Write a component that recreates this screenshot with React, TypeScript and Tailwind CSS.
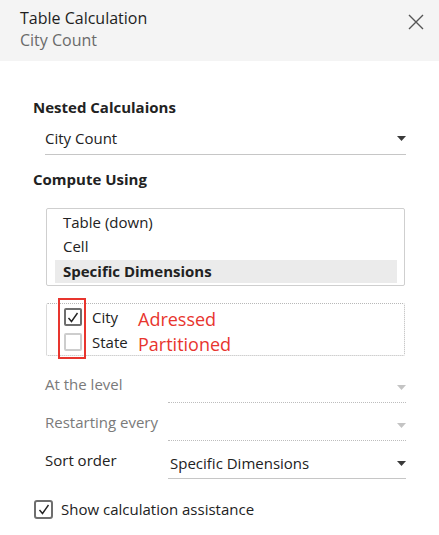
import React from "react";

const font = { fontFamily: '"Open Sans", "Noto Sans", Arial, sans-serif' };

const Caret = ({ light }: { light?: boolean }) => (
  <svg width="9" height="5" viewBox="0 0 9 5" className="shrink-0">
    <path d="M0 0h9L4.5 5z" fill={light ? "#c4c4c4" : "#3a3a3a"} />
  </svg>
);

const Check = () => (
  <svg width="12" height="11" viewBox="0 0 12 11">
    <path d="M1.5 6l3 3.5L10.5 1" fill="none" stroke="#222" strokeWidth="1.4" />
  </svg>
);

const FieldRow = ({ label, value, disabled }: { label: string; value?: string; disabled?: boolean }) => (
  <div className="flex items-end h-[38px]">
    <div className={`w-[123px] pb-[9px] leading-[20px] ${disabled ? "text-[#7a7a7a]" : "text-[#222]"}`}>{label}</div>
    <div
      className={`flex items-center w-[238px] h-[38px] pt-[8px] border-b ${
        disabled ? "border-dotted border-[#bdbdbd]" : "border-[#c6c6c6]"
      }`}
    >
      <span className="flex-1 pl-[2px] text-[#222]">{value}</span>
      <Caret light={disabled} />
    </div>
  </div>
);

export default function App() {
  return (
    <div className="w-[439px] h-[535px] bg-white text-[15px] text-[#222]" style={font}>
      {/* Header */}
      <div className="h-[61px] bg-[#f4f4f4] flex justify-between pl-[20px] pr-[15px] pt-[7px]">
        <div className="leading-[22px] text-[16px]">
          <div className="text-[#1e1e1e]">Table Calculation</div>
          <div className="text-[#6a6a6a]">City Count</div>
        </div>
        <svg width="16" height="16" viewBox="0 0 16 16" className="mt-[7px]">
          <path d="M1 1l14 14M15 1L1 15" stroke="#555" strokeWidth="1.4" />
        </svg>
      </div>

      <div className="pl-[33px] pt-[35px]">
        <div className="font-bold leading-[22px]">Nested Calculaions</div>

        <div className="ml-[12px] w-[361px] h-[37px] pt-[4px] flex items-center border-b border-[#c6c6c6]">
          <span className="flex-1">City Count</span>
          <Caret />
        </div>

        <div className="font-bold leading-[22px] mt-[13px]">Compute Using</div>

        {/* Compute using list */}
        <div className="ml-[13px] mt-[18px] w-[359px] h-[78px] border border-[#cfcfcf] rounded-[2px] pt-[1px]">
          <div className="pl-[16px] leading-[24px]">Table (down)</div>
          <div className="pl-[16px] leading-[24px]">Cell</div>
          <div className="mt-[2px] ml-[8px] mr-[7px] pl-[8px] bg-[#ebebeb] font-bold leading-[23px]">Specific Dimensions</div>
        </div>

        {/* Dimensions list */}
        <div className="relative ml-[13px] mt-[17px] w-[359px] h-[53px] border border-dotted border-[#b8b8b8] rounded-[2px] pt-[1px]">
          <div className="flex items-center h-[24px]">
            <div className="ml-[17px] w-[18px] h-[18px] border-2 border-[#6e6e6e] rounded-[2px] flex items-center justify-center">
              <Check />
            </div>
            <span className="ml-[10px] w-[46px]">City</span>
            <span className="text-[18px] text-[#e8352e] leading-[24px] translate-y-[2px]">Adressed</span>
          </div>
          <div className="flex items-center h-[24px] mt-[1px]">
            <div className="ml-[17px] w-[18px] h-[18px] border-2 border-[#cdcdcd] rounded-[2px]" />
            <span className="ml-[10px] w-[46px]">State</span>
            <span className="text-[18px] text-[#e8352e] leading-[24px] translate-y-[2px]">Partitioned</span>
          </div>
          <div className="absolute left-[11px] top-[-6px] w-[28px] h-[61px] border-[2px] border-[#e8352e]" />
        </div>

        <div className="ml-[12px] mt-[9px]">
          <FieldRow label="At the level" disabled />
          <FieldRow label="Restarting every" disabled />
          <FieldRow label="Sort order" value="Specific Dimensions" />
        </div>

        <div className="flex items-center mt-[19px]">
          <div className="ml-[1px] w-[19px] h-[19px] border-2 border-[#6e6e6e] rounded-[3px] flex items-center justify-center">
            <Check />
          </div>
          <span className="ml-[8px]">Show calculation assistance</span>
        </div>
      </div>
    </div>
  );
}
